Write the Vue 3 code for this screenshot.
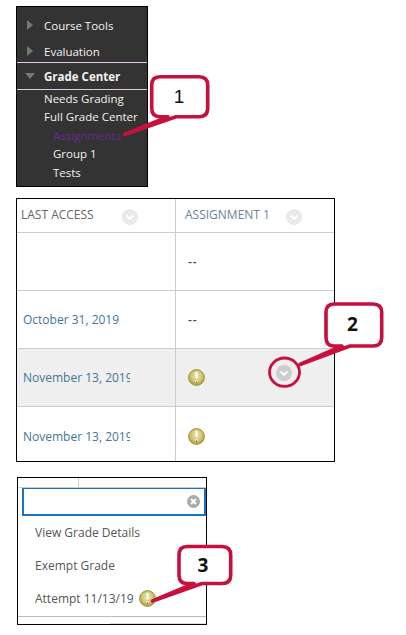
<script setup>
const menuTop = [
  { label: 'Needs Grading', sub: false },
  { label: 'Full Grade Center', sub: false },
  { label: 'Assignments', sub: true, active: true },
  { label: 'Group 1', sub: true },
  { label: 'Tests', sub: true }
]
const rows = [
  { date: '', dash: true },
  { date: 'October 31, 2019', dash: true },
  { date: 'November 13, 2019', hover: true },
  { date: 'November 13, 2019', last: true }
]
</script>

<template>
  <div class="page">
    <svg width="0" height="0" class="defs">
      <defs>
        <radialGradient id="gold" cx="50%" cy="42%" r="58%">
          <stop offset="0" stop-color="#ece6b4"/>
          <stop offset=".55" stop-color="#d3ca78"/>
          <stop offset="1" stop-color="#a89b3a"/>
        </radialGradient>
        <symbol id="warn" viewBox="0 0 17 17">
          <circle cx="8.5" cy="8.5" r="7.9" fill="url(#gold)" stroke="#a2963a" stroke-width="1"/>
          <path d="M7.2 3h2.6l-.6 7.2H7.8z" fill="#fff"/>
          <path d="M7.8 10.2h1.4" stroke="#c9a98a" stroke-width="1"/>
          <circle cx="8.5" cy="12.6" r="1.5" fill="#fff"/>
          <circle cx="8.5" cy="13.2" r=".9" fill="#b8452f"/>
        </symbol>
      </defs>
    </svg>

    <nav class="menu">
      <div class="sec sec-a"><span class="tri"></span>Course Tools</div>
      <div class="sec sec-b"><span class="tri"></span>Evaluation</div>
      <div class="sec sec-c"><span class="tri-down"></span>Grade Center</div>
      <div
        v-for="m in menuTop"
        :key="m.label"
        class="item"
        :class="{ sub: m.sub, active: m.active }"
      >{{ m.label }}</div>
    </nav>

    <div class="grid">
      <div class="head">
        <div class="hcell left">
          <span class="htext">LAST ACCESS</span>
          <svg class="chev" width="16" height="16" viewBox="0 0 16 16"><circle cx="8" cy="8" r="8" fill="#e9e9e9"/><path d="M4.5 6.5 8 9.8l3.5-3.3" fill="none" stroke="#fff" stroke-width="2"/></svg>
        </div>
        <div class="hcell right">
          <span class="htext blue">ASSIGNMENT 1</span>
          <svg class="chev" width="16" height="16" viewBox="0 0 16 16"><circle cx="8" cy="8" r="8" fill="#e9e9e9"/><path d="M4.5 6.5 8 9.8l3.5-3.3" fill="none" stroke="#fff" stroke-width="2"/></svg>
        </div>
      </div>
      <div
        v-for="(r, i) in rows"
        :key="i"
        class="row"
        :class="{ hover: r.hover, last: r.last }"
      >
        <div class="cell left"><span class="date">{{ r.date }}</span></div>
        <div class="cell right">
          <span v-if="r.dash" class="dash">--</span>
          <svg v-else class="warn" width="17" height="17"><use href="#warn"/></svg>
        </div>
      </div>
    </div>

    <div class="pop">
      <div class="pop-top"><span class="pop-tick"></span></div>
      <div class="search">
        <svg width="13" height="13" viewBox="0 0 13 13"><circle cx="6.5" cy="6.5" r="6.5" fill="#a9a9a9"/><path d="M4 4l5 5M9 4l-5 5" stroke="#fff" stroke-width="2"/></svg>
      </div>
      <div class="opt">View Grade Details</div>
      <div class="opt">Exempt Grade</div>
      <div class="opt">Attempt 11/13/19
        <svg class="warn" width="17" height="17"><use href="#warn"/></svg>
      </div>
      <div class="pop-foot"></div>
      <div class="pop-foot2"></div>
    </div>

    <svg class="notes" width="406" height="635" viewBox="0 0 406 635">
      <g fill="#fff" stroke="#c8103e" stroke-width="3.6" stroke-linejoin="round">
        <path d="M160 76.7H199Q207.7 76.7 207.7 85V108Q207.7 116.7 199 116.7H176L124.5 134.5L168 116.7H160Q151.7 116.7 151.7 108V85Q151.7 76.7 160 76.7Z"/>
        <path d="M334 304H373Q381.7 304 381.7 312.5V337.5Q381.7 346 373 346H350L300 364.5L342 346H334Q326 346 326 337.5V312.5Q326 304 334 304Z"/>
        <path d="M187 546.5H222Q230.7 546.5 230.7 555V575Q230.7 583.5 222 583.5H202L152.5 601L194 583.5H187Q179 583.5 179 575V555Q179 546.5 187 546.5Z"/>
      </g>
      <ellipse cx="284.5" cy="372.2" rx="15" ry="14.2" fill="none" stroke="#c8103e" stroke-width="2.8"/>
      <circle cx="284" cy="373" r="8" fill="#cccccc"/>
      <path d="M280.5 371.5 284 374.8l3.5-3.3" fill="none" stroke="#fff" stroke-width="2"/>
      <text x="179" y="103" class="n1" text-anchor="middle">1</text>
      <text x="352.5" y="331" class="n2" text-anchor="middle">2</text>
      <text x="203" y="572" class="n2" text-anchor="middle">3</text>
    </svg>
  </div>
</template>

<style>
body { background: #fff; }
</style>

<style scoped>
.page {
  position: relative;
  width: 406px;
  height: 635px;
  padding: 6px 0 0 16px;
  box-sizing: border-box;
  overflow: hidden;
  font-family: "Open Sans", sans-serif;
  font-size: 12px;
  color: #555;
}
.defs { position: absolute; }
.menu {
  width: 132px;
  height: 181px;
  box-sizing: border-box;
  border: 1px solid #000;
  background: #333;
  color: #f2f2f2;
  font-size: 11.5px;
}
.sec {
  position: relative;
  padding-left: 27px;
  display: flex;
  align-items: center;
  box-sizing: border-box;
}
.sec-a { height: 36px; }
.sec-b { height: 16px; margin-bottom: 3px; }
.sec-c {
  height: 28px;
  font-weight: 700;
  border-top: 1px solid #e3c6e6;
  border-bottom: 1px solid #e3c6e6;
}
.tri {
  position: absolute;
  left: 10px;
  width: 0;
  height: 0;
  border-left: 6px solid #777;
  border-top: 5px solid transparent;
  border-bottom: 5px solid transparent;
}
.tri-down {
  position: absolute;
  left: 8px;
  width: 0;
  height: 0;
  border-top: 6px solid #777;
  border-left: 5px solid transparent;
  border-right: 5px solid transparent;
}
.item {
  height: 18.4px;
  line-height: 18.4px;
  padding-left: 27px;
}
.item.sub { padding-left: 36px; }
.item.active { color: #6b2a8c; }

.grid {
  width: 319px;
  height: 264px;
  margin-top: 11px;
  box-sizing: border-box;
  border: 1px solid #000;
  display: flex;
  flex-direction: column;
  overflow: hidden;
}
.head, .row {
  display: flex;
  flex: none;
  box-sizing: border-box;
  border-bottom: 1px solid #ccc;
}
.head { height: 34px; }
.row { height: 58px; }
.row.last { border-bottom: 0; }
.row.hover { background: #efefef; }
.hcell, .cell {
  display: flex;
  align-items: center;
  box-sizing: border-box;
}
.left { width: 159px; border-right: 1px solid #ccc; }
.right { flex: 1; }
.hcell { position: relative; padding-bottom: 3px; }
.hcell.left { padding-left: 4px; }
.hcell.right { padding-left: 9px; }
.htext { font-size: 12px; color: #666; white-space: nowrap; }
.htext.blue { color: #6b8299; }
.chev { position: absolute; top: 10px; }
.hcell.left .chev { left: 105px; }
.hcell.right .chev { left: 110px; }
.cell.left { padding-left: 6px; }
.cell.right { padding-left: 12px; }
.date {
  display: block;
  width: 107px;
  overflow: hidden;
  white-space: nowrap;
  color: #3f7596;
}
.dash { color: #1d4f80; letter-spacing: 1px; font-weight: 600; }
.warn { display: block; flex: none; }

.pop {
  position: relative;
  width: 190px;
  height: 148px;
  margin-top: 15px;
  margin-left: 1px;
  box-sizing: border-box;
  border: 1px solid #000;
  color: #555;
}
.pop-top {
  height: 9px;
  border-bottom: 1px solid #ccc;
  position: relative;
}
.pop-tick {
  position: absolute;
  left: 60px;
  top: 0;
  width: 1px;
  height: 9px;
  background: #ccc;
}
.search {
  margin-left: 4px;
  width: 184px;
  height: 29px;
  box-sizing: border-box;
  border: 2px solid #1874c8;
  margin-top: -1px;
  display: flex;
  align-items: center;
  justify-content: flex-end;
  padding-right: 4px;
}
.opt {
  height: 33px;
  display: flex;
  align-items: center;
  padding-left: 17px;
  gap: 5px;
}
.pop-foot {
  height: 1px;
  background: #bbb;
  margin-top: 1px;
}
.pop-foot2 {
  height: 1px;
  background: #ddd;
  margin: 6px 0 0 92px;
}
.notes {
  position: absolute;
  left: 0;
  top: 0;
  pointer-events: none;
}
.n1 { font-family: "Liberation Sans", sans-serif; font-size: 19px; fill: #111; }
.n2 { font-family: "Open Sans", sans-serif; font-size: 19px; font-weight: 700; fill: #111; }
</style>
